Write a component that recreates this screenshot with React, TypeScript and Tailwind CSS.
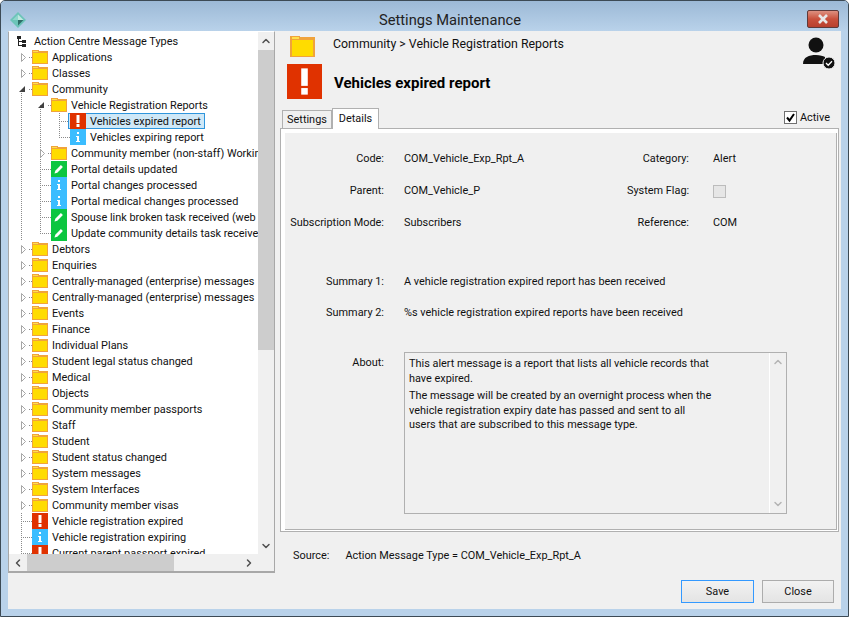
import { ChevronDown, ChevronLeft, ChevronRight, ChevronUp } from "lucide-react";

type RowKind = "folder" | "alert" | "info" | "edit";

type TreeRow = {
  label: string;
  depth: 0 | 1 | 2;
  kind: RowKind;
  toggle?: "open" | "closed";
  selected?: boolean;
  spines?: [number, number, number][];
};

const rows: TreeRow[] = [
  { label: "Applications", depth: 0, kind: "folder", toggle: "closed" },
  { label: "Classes", depth: 0, kind: "folder", toggle: "closed" },
  { label: "Community", depth: 0, kind: "folder", toggle: "open" },
  { label: "Vehicle Registration Reports", depth: 1, kind: "folder", toggle: "open", spines: [[40, 8, 16]] },
  { label: "Vehicles expired report", depth: 2, kind: "alert", selected: true, spines: [[40, 0, 16], [59, 0, 16]] },
  { label: "Vehicles expiring report", depth: 2, kind: "info", spines: [[40, 0, 16], [59, 0, 8]] },
  { label: "Community member (non-staff) Working", depth: 1, kind: "folder", toggle: "closed", spines: [[40, 0, 16]] },
  { label: "Portal details updated", depth: 1, kind: "edit", spines: [[40, 0, 16]] },
  { label: "Portal changes processed", depth: 1, kind: "info", spines: [[40, 0, 16]] },
  { label: "Portal medical changes processed", depth: 1, kind: "info", spines: [[40, 0, 16]] },
  { label: "Spouse link broken task received (web", depth: 1, kind: "edit", spines: [[40, 0, 16]] },
  { label: "Update community details task received", depth: 1, kind: "edit", spines: [[40, 0, 8]] },
  { label: "Debtors", depth: 0, kind: "folder", toggle: "closed" },
  { label: "Enquiries", depth: 0, kind: "folder", toggle: "closed" },
  { label: "Centrally-managed (enterprise) messages", depth: 0, kind: "folder", toggle: "closed" },
  { label: "Centrally-managed (enterprise) messages", depth: 0, kind: "folder", toggle: "closed" },
  { label: "Events", depth: 0, kind: "folder", toggle: "closed" },
  { label: "Finance", depth: 0, kind: "folder", toggle: "closed" },
  { label: "Individual Plans", depth: 0, kind: "folder", toggle: "closed" },
  { label: "Student legal status changed", depth: 0, kind: "folder", toggle: "closed" },
  { label: "Medical", depth: 0, kind: "folder", toggle: "closed" },
  { label: "Objects", depth: 0, kind: "folder", toggle: "closed" },
  { label: "Community member passports", depth: 0, kind: "folder", toggle: "closed" },
  { label: "Staff", depth: 0, kind: "folder", toggle: "closed" },
  { label: "Student", depth: 0, kind: "folder", toggle: "closed" },
  { label: "Student status changed", depth: 0, kind: "folder", toggle: "closed" },
  { label: "System messages", depth: 0, kind: "folder", toggle: "closed" },
  { label: "System Interfaces", depth: 0, kind: "folder", toggle: "closed" },
  { label: "Community member visas", depth: 0, kind: "folder", toggle: "closed" },
  { label: "Vehicle registration expired", depth: 0, kind: "alert" },
  { label: "Vehicle registration expiring", depth: 0, kind: "info" },
  { label: "Current parent passport expired", depth: 0, kind: "alert" },
];

// x of the icon at each depth, measured from the tree's content edge (window x - 9)
const iconX = [23, 42, 61];

function Guides({ row, index }: { row: TreeRow; index: number }) {
  const x = iconX[row.depth];
  const spineX = x - 11;
  const communityOpen = index > 2 && index < 12;
  return (
    <svg width={row.selected ? x - 2 : x} height={16} className="shrink-0" shapeRendering="crispEdges">
      <g stroke="#8a8a8a" strokeDasharray="1 1" strokeWidth="1">
        {communityOpen ? <line x1="12.5" x2="12.5" y1="0" y2="16" /> : null}
        {index === 2 ? <line x1="12.5" x2="12.5" y1="12" y2="16" /> : null}
        {index > 28 ? <line x1="12.5" x2="12.5" y1="0" y2="16" /> : null}
        {(row.spines ?? []).map(([sx, y1, y2]) => (
          <line key={sx} x1={sx - 9 + 0.5} x2={sx - 9 + 0.5} y1={y1} y2={y2} />
        ))}
        <line x1={row.toggle ? spineX + 8 : spineX} x2={x} y1="8.5" y2="8.5" />
      </g>
      {row.toggle === "closed" ? (
        <path d={`M${spineX + 0.5} 4.5 L${spineX + 4.5} 8.5 L${spineX + 0.5} 12.5 Z`} fill="#fff" stroke="#a6a6a6" shapeRendering="auto" />
      ) : null}
      {row.toggle === "open" ? <path d={`M${spineX + 4} 5 V11 H${spineX - 2} Z`} fill="#404040" shapeRendering="auto" /> : null}
    </svg>
  );
}

function FolderIcon({ size = 16 }: { size?: number }) {
  return (
    <svg width={size} height={size} viewBox="0 0 16 16" className="shrink-0" shapeRendering="crispEdges">
      <path d="M0 1h6l1 1h9v13H0z" fill="#f0a33c" />
      <rect x="1" y="2" width="5" height="1" fill="#ffe04a" />
      <rect x="1" y="4" width="14" height="10" fill="#ffdc00" />
    </svg>
  );
}

function StatusIcon({ kind, size = 16 }: { kind: RowKind; size?: number }) {
  if (kind === "folder") return <FolderIcon size={size} />;
  if (kind === "alert") {
    return (
      <svg width={size} height={size} viewBox="0 0 16 16" className="shrink-0">
        <rect width="16" height="16" fill="#e03200" />
        <rect x="6.5" y="2" width="3" height="8" fill="#fff" />
        <rect x="6.5" y="11" width="3" height="3" fill="#fff" />
      </svg>
    );
  }
  if (kind === "info") {
    return (
      <svg width={size} height={size} viewBox="0 0 16 16" className="shrink-0" shapeRendering="crispEdges">
        <rect width="16" height="16" fill="#3bbdff" />
        <rect x="7" y="3" width="2" height="2" fill="#fff" />
        <path d="M6 7h3v5h1v1H6v-1h1V8H6z" fill="#fff" />
      </svg>
    );
  }
  return (
    <svg width={size} height={size} viewBox="0 0 16 16" className="shrink-0">
      <rect width="16" height="16" fill="#0cc640" />
      <path d="M3.5 12.5l.8-2.8 5.6-5.6 2 2-5.6 5.6z" fill="#fff" />
    </svg>
  );
}

function TreeItem({ row, index }: { row: TreeRow; index: number }) {
  return (
    <div className="flex h-4 items-center whitespace-nowrap">
      <Guides row={row} index={index} />
      {row.selected ? (
        <span className="flex h-4 w-[137px] shrink-0 items-center border border-[#2f95dc] bg-[#cfe8f7] pl-px">
          <StatusIcon kind={row.kind} />
          <span className="ml-1 mt-[2px]">{row.label}</span>
        </span>
      ) : (
        <>
          <StatusIcon kind={row.kind} />
          <span className="ml-1 mt-[2px]">{row.label}</span>
        </>
      )}
    </div>
  );
}

function LabelledValue({ label, value }: { label: string; value: string }) {
  return (
    <div className="flex">
      <span className="w-[99px] whitespace-nowrap text-right">{label}</span>
      <span className="ml-[20px] whitespace-nowrap">{value}</span>
    </div>
  );
}

function SideValue({ label, children }: { label: string; children: React.ReactNode }) {
  return (
    <div className="flex items-center">
      <span className="w-[62px] whitespace-nowrap text-right">{label}</span>
      <span className="ml-[24px]">{children}</span>
    </div>
  );
}

export default function App() {
  return (
    <div
      className="flex h-[617px] w-[849px] flex-col overflow-hidden rounded-t-[5px] border border-[#3c4a55] bg-[#b9d2ea] px-[7px] pb-[7px] text-[10.9px] leading-4 text-[#111]"
      style={{ fontFamily: 'Roboto, Arial, sans-serif' }}
    >
      <header className="relative -mx-[7px] flex h-[30px] shrink-0 justify-center bg-gradient-to-b from-[#9cb9d6] to-[#b9d2ea] pl-[51px] pt-[9px]">
        <svg width="16" height="16" viewBox="0 0 16 16" className="absolute left-[9px] top-[11px]">
          <path d="M8 0l8 8-8 8-8-8z" fill="#6cc4b8" />
          <path d="M8 2.5l5.5 5.5H8z" fill="#bfe8e0" />
          <path d="M2.5 8H8V2.5z" fill="#8fd6cb" />
          <path d="M8 8h5.5L8 13.5z" fill="#2f6e68" />
        </svg>
        <span className="text-[14.7px] leading-5 text-[#222]">Settings Maintenance</span>
        <button
          type="button"
          className="absolute right-[9px] top-[9px] flex h-[18px] w-[32px] items-center justify-center rounded-[2px] border border-[#5e3a3a] bg-gradient-to-b from-[#dd9080] via-[#c9503c] to-[#b8402e]"
        >
          <svg width="12" height="10" viewBox="0 0 12 10">
            <path d="M2 1l8 8M10 1L2 9" stroke="#e8e8e8" strokeWidth="2.6" fill="none" />
          </svg>
        </button>
      </header>

      <div className="flex min-h-0 flex-1 bg-[#f0f0f0]">
        <aside className="flex h-[542px] w-[267px] shrink-0 flex-col border border-b-2 border-[#a8a8a8] border-t-white bg-white">
          <div className="flex min-h-0 flex-1">
            <div className="min-w-0 flex-1 overflow-hidden pt-px">
              <div className="flex h-4 items-center whitespace-nowrap pl-[8px]">
                <svg width="10" height="11" viewBox="0 0 10 11" className="shrink-0" shapeRendering="crispEdges">
                  <path d="M0 0h4v3H0zM5 4h4v3H5zM5 8h4v3H5zM1 3h1v6h3v1H1zM2 5h3v1H2z" fill="#222" />
                </svg>
                <span className="ml-[7px] mt-[2px]">Action Centre Message Types</span>
              </div>
              {rows.map((row, index) => (
                <TreeItem key={row.label + index} row={row} index={index} />
              ))}
            </div>
            <div className="flex w-[16px] shrink-0 flex-col bg-[#f0f0f0]">
              <div className="flex h-[18px] items-center justify-center">
                <ChevronUp size={12} strokeWidth={3} color="#505050" />
              </div>
              <div className="h-[300px] bg-[#cdcdcd]" />
              <div className="flex-1" />
              <div className="flex h-[17px] items-center justify-center">
                <ChevronDown size={12} strokeWidth={3} color="#505050" />
              </div>
            </div>
          </div>
          <div className="flex h-[17px] shrink-0 items-center bg-[#f0f0f0]">
            <div className="flex w-[18px] items-center justify-center">
              <ChevronLeft size={12} strokeWidth={3} color="#505050" />
            </div>
            <div className="h-full w-[147px] bg-[#cdcdcd]" />
            <div className="flex-1" />
            <div className="mr-[17px] flex w-[17px] items-center justify-center">
              <ChevronRight size={12} strokeWidth={3} color="#505050" />
            </div>
          </div>
        </aside>

        <main className="flex min-w-0 flex-1 flex-col pl-[5px] pr-[2px]">
          <div className="flex h-[33px] shrink-0 items-start">
            <div className="ml-[10px] mt-[3px]">
              <FolderIcon size={25} />
            </div>
            <span className="ml-[18px] mt-[5px] text-[12.35px]">Community &gt; Vehicle Registration Reports</span>
            <svg width="34" height="34" viewBox="0 0 34 34" className="ml-auto mr-[3px] mt-[5px]">
              <circle cx="14" cy="9" r="7.5" fill="#111" />
              <path d="M1 28c0-7 6-9 13-9 4 0 7 1 9 2v7z" fill="#111" />
              <circle cx="27" cy="27" r="6" fill="#111" stroke="#f0f0f0" strokeWidth="1" />
              <path d="M24 27l2.2 2.2 3.8-4" stroke="#fff" strokeWidth="1.3" fill="none" />
            </svg>
          </div>
          <div className="flex h-[35px] shrink-0 items-center">
            <div className="ml-[7px]">
              <StatusIcon kind="alert" size={35} />
            </div>
            <span className="ml-[12px] mt-[2px] text-[15px] font-bold text-black">Vehicles expired report</span>
          </div>
          <div className="flex h-[29px] shrink-0 items-end">
            <div className="mb-0 ml-[2px] flex h-[18px] w-[50px] items-center justify-center border border-b-0 border-[#b0b0b0] pt-px">Settings</div>
            <div className="z-10 -mb-px flex h-[21px] w-[47px] items-center justify-center border border-b-0 border-[#b0b0b0] bg-white">Details</div>
            <label className="mb-[2px] ml-auto mr-[9px] flex items-center gap-[3px]">
              <svg width="13" height="13" viewBox="0 0 13 13" className="shrink-0">
                <rect x="0.5" y="0.5" width="12" height="12" fill="#fff" stroke="#707070" />
                <path d="M3 6.5l2.5 3 4.5-6.5" stroke="#000" strokeWidth="2" fill="none" />
              </svg>
              <span className="mt-[2px]">Active</span>
            </label>
          </div>
          <div className="h-[404px] shrink-0 border border-[#b0b0b0] bg-white pb-px pl-[4px] pr-px pt-[4px]">
            <div className="flex h-full flex-col border-b border-r border-[#b0b0b0] bg-[#f0f0f0] pt-[18px]">
              <div className="grid grid-cols-[342px_1fr] gap-y-[16px]">
                <LabelledValue label="Code:" value="COM_Vehicle_Exp_Rpt_A" />
                <SideValue label="Category:">Alert</SideValue>
                <LabelledValue label="Parent:" value="COM_Vehicle_P" />
                <SideValue label="System Flag:">
                  <span className="block h-[13px] w-[13px] border border-[#bcbcbc] bg-[#e6e6e6]" />
                </SideValue>
                <LabelledValue label="Subscription Mode:" value="Subscribers" />
                <SideValue label="Reference:">COM</SideValue>
              </div>
              <div className="mt-[43px] flex flex-col gap-[15px]">
                <LabelledValue label="Summary 1:" value="A vehicle registration expired report has been received" />
                <LabelledValue label="Summary 2:" value="%s vehicle registration expired reports have been received" />
              </div>
              <div className="mt-[31px] flex">
                <span className="mt-[3px] w-[99px] text-right">About:</span>
                <div className="ml-[20px] flex h-[162px] w-[383px] border border-[#b0b0b0]">
                  <div className="flex-1 px-[4px] pt-[4px] leading-[14.5px]">
                    <p className="w-[304px]">This alert message is a report that lists all vehicle records that have expired.</p>
                    <p className="mt-[3px] w-[304px]">The message will be created by an overnight process when the vehicle registration expiry date has passed and sent to all users that are subscribed to this message type.</p>
                  </div>
                  <div className="flex w-[17px] flex-col items-center justify-between border-l border-white py-[3px]">
                    <ChevronUp size={12} strokeWidth={3} color="#b4b4b4" />
                    <ChevronDown size={12} strokeWidth={3} color="#b4b4b4" />
                  </div>
                </div>
              </div>
            </div>
          </div>
          <div className="mt-[16px] flex">
            <span className="ml-[13px]">Source:</span>
            <span className="ml-[16px]">Action Message Type = COM_Vehicle_Exp_Rpt_A</span>
          </div>
          <div className="mb-[6px] mt-auto flex justify-end gap-[8px] pr-[5px]">
            <button type="button" className="h-[23px] w-[73px] border border-[#3399ff] bg-gradient-to-b from-[#f2f2f2] to-[#e4e4e4]">Save</button>
            <button type="button" className="h-[23px] w-[72px] border border-[#acacac] bg-gradient-to-b from-[#f2f2f2] to-[#e4e4e4]">Close</button>
          </div>
        </main>
      </div>
    </div>
  );
}
